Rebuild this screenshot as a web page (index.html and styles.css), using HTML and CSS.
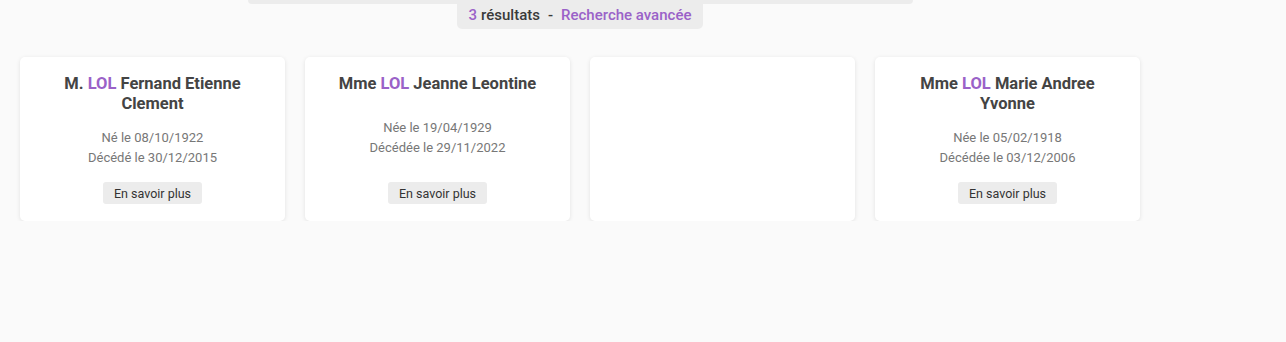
FILE: index.html
```html
<!DOCTYPE html>
<html lang="fr">
<head>
    <meta charset="UTF-8">
    <meta name="viewport" content="width=device-width, initial-scale=1.0">
    <title>Résultats de recherche</title>
    <link rel="stylesheet" href="styles.css">
</head>
<body>
    <div class="page">
        <div class="search-head">
            <div class="search-bar"></div>
            <div class="result-count">
                <span class="accent">3</span> résultats <span class="sep">-</span>
                <a class="accent" href="#">Recherche avancée</a>
            </div>
        </div>

        <div class="results">
            <div class="card">
                <h2 class="card-name">M. <span class="accent">LOL</span> Fernand Etienne Clement</h2>
                <div class="card-dates">
                    <p>Né le 08/10/1922</p>
                    <p>Décédé le 30/12/2015</p>
                </div>
                <button class="more-button">En savoir plus</button>
            </div>
            <div class="card">
                <h2 class="card-name">Mme <span class="accent">LOL</span> Jeanne Leontine</h2>
                <div class="card-dates">
                    <p>Née le 19/04/1929</p>
                    <p>Décédée le 29/11/2022</p>
                </div>
                <button class="more-button">En savoir plus</button>
            </div>
            <div class="card"></div>
            <div class="card">
                <h2 class="card-name">Mme <span class="accent">LOL</span> Marie Andree Yvonne</h2>
                <div class="card-dates">
                    <p>Née le 05/02/1918</p>
                    <p>Décédée le 03/12/2006</p>
                </div>
                <button class="more-button">En savoir plus</button>
            </div>
        </div>
    </div>
</body>
</html>
```

FILE: styles.css
```css
:root {
    --accent-color: #9a62c8;
    --background-color: #fafafa;
    --panel-color: #ececec;
    --text-color: #444444;
    --muted-color: #777777;
}

* {
    margin: 0;
    padding: 0;
    box-sizing: border-box;
}

body {
    font-family: 'Roboto', 'Liberation Sans', sans-serif;
    background: var(--background-color);
    color: var(--text-color);
}

.page {
    width: 1160px;
}

.search-head {
    display: flex;
    flex-direction: column;
    align-items: center;
}

.search-bar {
    width: 665px;
    height: 4px;
    background: var(--panel-color);
    border-radius: 0 0 6px 6px;
}

.result-count {
    margin-top: -4px;
    height: 29px;
    padding: 0 12px;
    background: var(--panel-color);
    border-radius: 0 0 5px 5px;
    display: flex;
    align-items: center;
    gap: 4px;
    font-size: 15px;
    font-weight: 500;
    color: #3a3a3a;
}

.result-count .sep {
    margin: 0 4px;
}

.accent {
    color: var(--accent-color);
}

a.accent {
    text-decoration: none;
}

.results {
    display: flex;
    gap: 20px;
    padding: 28px 20px 0;
}

.card {
    width: 265px;
    height: 164px;
    background: #ffffff;
    border-radius: 5px;
    box-shadow: 0 1px 4px rgba(0, 0, 0, 0.1);
    padding: 17px 20px;
    display: flex;
    flex-direction: column;
    justify-content: space-between;
    align-items: center;
    text-align: center;
}

.card-name {
    font-size: 16.5px;
    font-weight: 700;
    line-height: 20px;
    color: var(--text-color);
}

.card-dates {
    font-size: 13px;
    line-height: 20px;
    color: var(--muted-color);
}

.more-button {
    font-family: inherit;
    font-size: 12.5px;
    color: #333333;
    background: var(--panel-color);
    border: none;
    border-radius: 3px;
    height: 22px;
    padding: 0 11px;
}
```
